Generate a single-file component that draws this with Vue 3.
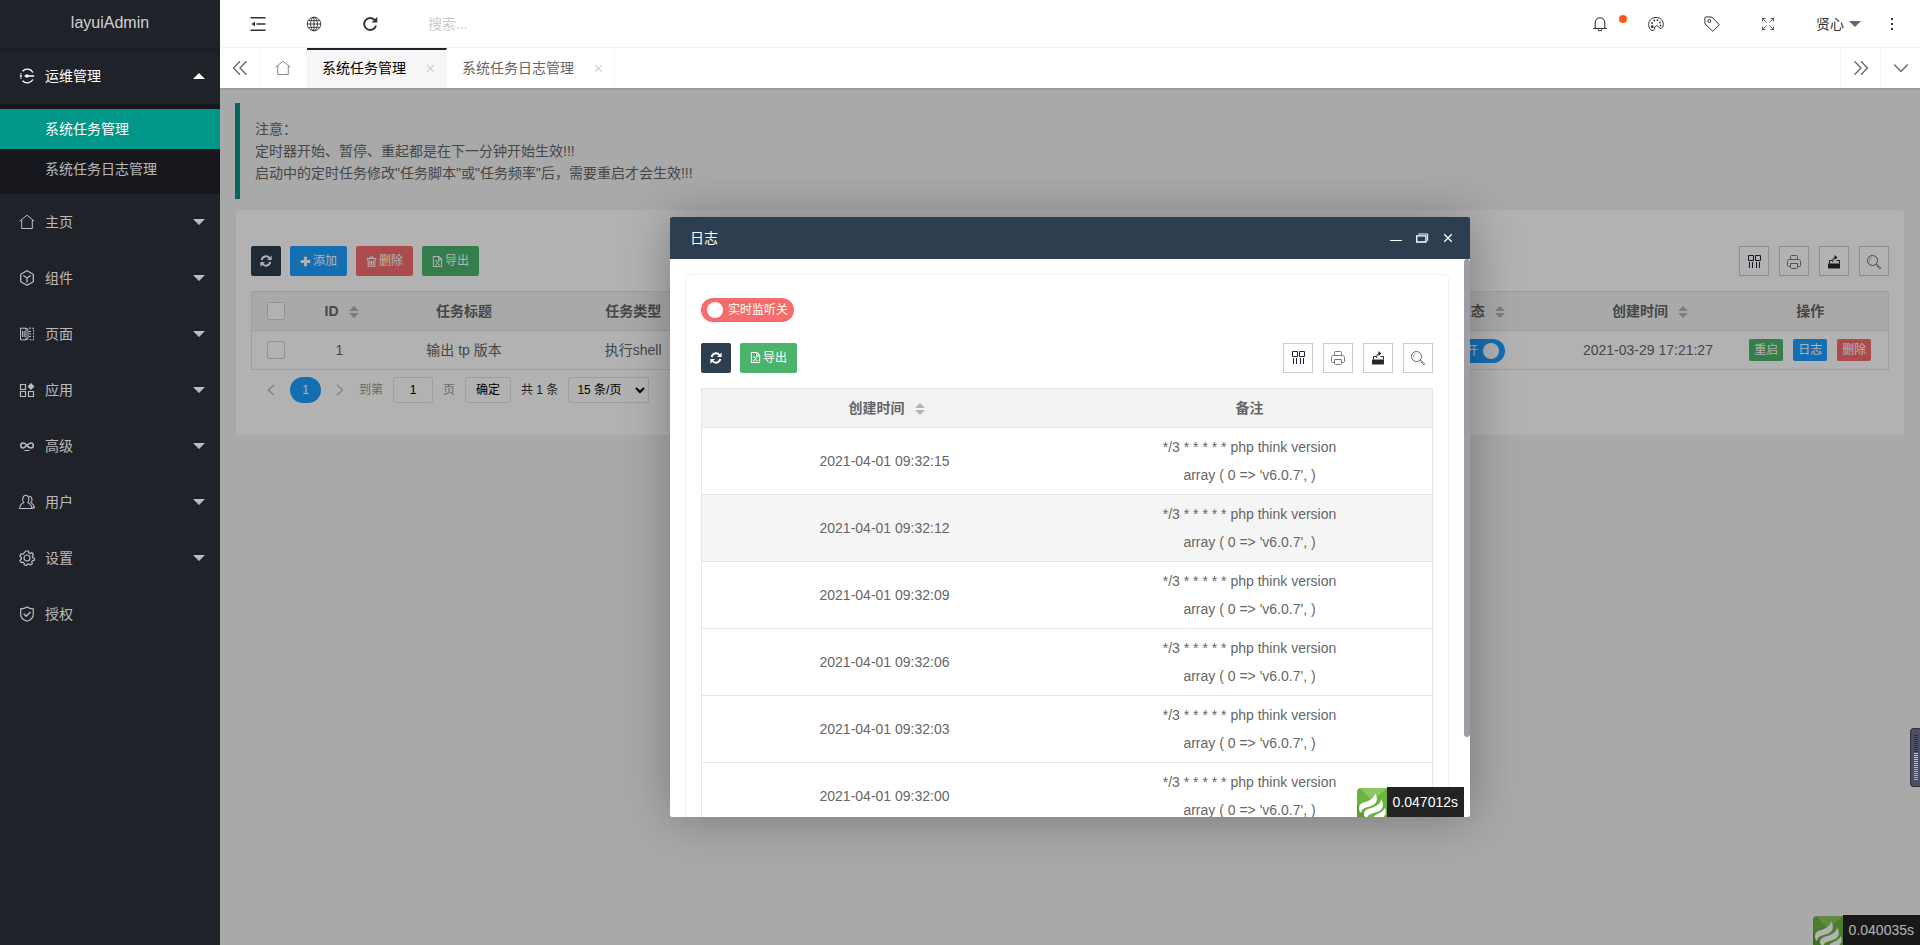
<script setup>
import { ref } from 'vue'

const menus = [
  { name: '主页', icon: 'home', more: true },
  { name: '组件', icon: 'cube', more: true },
  { name: '页面', icon: 'pages', more: true },
  { name: '应用', icon: 'apps', more: true },
  { name: '高级', icon: 'senior', more: true },
  { name: '用户', icon: 'user', more: true },
  { name: '设置', icon: 'gear', more: true },
  { name: '授权', icon: 'shield', more: false }
]
const tools = [
  { icon: 'cols', label: '筛选列' },
  { icon: 'print', label: '打印' },
  { icon: 'export', label: '导出' },
  { icon: 'search', label: '搜索' }
]
const times = ['15', '12', '09', '06', '03', '00']
const page = ref('1')
const keyword = ref('')
const pageSize = ref('15')
const running = ref(true)
const listening = ref(false)
</script>

<template>
  <div class="admin">
    <svg class="sprite" aria-hidden="true">
      <symbol id="i-ops" viewBox="0 0 16 16"><g fill="none" stroke="currentColor" stroke-width="1.3"><path d="M14 4.500A6.600 6.600 0 0 0 3.500 3.200M14 11.500A6.600 6.600 0 0 1 3.500 12.800"/><path d="M.8 8H3M5.500 8h9.700"/><path d="M1.900 5.200v1.300M1.900 9.500v1.300"/></g><circle cx="8" cy="8" r="1.700" fill="currentColor"/></symbol>
      <symbol id="i-home" viewBox="0 0 16 16"><path d="M.7 7.2 8 1.2l7.3 6M2.7 6v8.5h10.6V6" fill="none" stroke="currentColor"/></symbol>
      <symbol id="i-cube" viewBox="0 0 16 16"><path d="M8 .8 14.3 4.3v7.4L8 15.2 1.7 11.7V4.3zM4.3 5.5 8 8l3.7-2.5M8 8v4.5" fill="none" stroke="currentColor" stroke-width="1.3"/></symbol>
      <symbol id="i-pages" viewBox="0 0 16 16"><path d="M1.5 2.2h5.500v11.600H1.500zM7 2.200l2 1v9.600l-2 1M3.500 5v6M5.200 5v6" fill="none" stroke="currentColor"/><path d="M10 2.200h4.500v11.600H10M10 5.500h3M10 8h3M10 10.500h3" fill="none" stroke="currentColor" stroke-dasharray="2 1"/></symbol>
      <symbol id="i-apps" viewBox="0 0 16 16"><path d="M1.500 2.500h5v5h-5zM1.500 9.500h5v5h-5zM9.500 9.500h5v5h-5z" fill="none" stroke="currentColor" stroke-width="1.200"/><path d="m12 1 3.500 3.500L12 8 8.500 4.500z" fill="currentColor"/></symbol>
      <symbol id="i-senior" viewBox="0 0 16 16"><path d="M8 7.500C6.500 5.200 5.300 4.900 4.200 4.900A2.500 2.500 0 0 0 4.200 9.900C6.500 9.900 9 4.900 11.800 4.900a2.500 2.500 0 0 1 0 5c-1.400 0-2.600-.5-3.800-2.400" fill="none" stroke="currentColor" stroke-width="1.500"/><path d="M5.500 12.500h5" stroke="currentColor"/></symbol>
      <symbol id="i-user" viewBox="0 0 16 16"><path d="M4.800 8.600C3 7 3.200 1.200 6.800 1.200S10.600 7 8.800 8.600c2.300 1.100 4 2.400 4 5.900H.7c0-3.500 1.800-4.800 4.100-5.900zM10 2.200c3.300.2 3.800 4.800 2 6.400 2 1.200 3.200 2.400 3.300 5.300h-2.500" fill="none" stroke="currentColor" stroke-width="1.100"/></symbol>
      <symbol id="i-gear" viewBox="0 0 16 16"><g fill="none" stroke="currentColor" stroke-width="1.200"><path d="M6.600 1h2.800l.4 1.900 1.200.6 1.800-.9 1.600 2-1.100 1.600.3 1.300 1.700.7v2l-1.900.5-.7 1.200.7 1.700-2 1.500-1.500-1.200-1.400.2-.9 1.400-2.400-.6-.1-1.900-1.100-.8-1.900.4-1.200-2.300 1.500-1.300V7.500L.9 6.300l1-2.400 2 .3 1-.9z"/><circle cx="8" cy="8" r="3"/></g></symbol>
      <symbol id="i-shield" viewBox="0 0 16 16"><path d="M8 .9c2 1.300 4 1.800 6.300 1.900v5.400c0 3.500-2.300 5.700-6.300 7.100-4-1.400-6.300-3.600-6.300-7.100V2.800C4 2.700 6 2.200 8 .9z" fill="none" stroke="currentColor" stroke-width="1.200"/><path d="m4.700 7.700 2.500 2.500 4.300-4.300" fill="none" stroke="currentColor" stroke-width="1.400"/></symbol>
      <symbol id="i-flex" viewBox="0 0 16 16"><path d="M.5 1.800h15M6.500 8h9M.5 14.200h15" stroke="currentColor" stroke-width="1.600"/><path d="M1.300 8 5 5.700v4.600z" fill="currentColor"/></symbol>
      <symbol id="i-globe" viewBox="0 0 16 16"><g fill="none" stroke="currentColor" stroke-width=".9"><circle cx="8" cy="8" r="6.800"/><ellipse cx="8" cy="8" rx="3.400" ry="6.800"/><path d="M1.200 8h13.600M8 1.200v13.600M2.300 4.600h11.400M2.300 11.400h11.400"/></g></symbol>
      <symbol id="i-reload" viewBox="0 0 16 16"><path d="M12.800 4.200A6 6 0 1 0 14 9.500" fill="none" stroke="currentColor" stroke-width="1.900"/><path d="M15.300.8v5.700H9.500z" fill="currentColor"/></symbol>
      <symbol id="i-bell" viewBox="0 0 16 16"><path d="M3.200 12V7c0-7 9.600-7 9.600 0v5M1 12.500h14M6.200 13.500c.5 1.700 3.100 1.700 3.600 0" fill="none" stroke="currentColor" stroke-width="1.100"/></symbol>
      <symbol id="i-theme" viewBox="0 0 16 16"><path d="M2.800 13.800C-.8 10 .3 3.800 5 2c5.500-2 10.300 1.500 10.300 6.300 0 2.700-1.500 4.300-3 4-1.600-.3-1.500-2.600-3.700-2.600-2.800 0-1.300 4.500-3.500 4.800-1 .2-1.700-.1-2.300-.7z" fill="none" stroke="currentColor"/><g fill="currentColor"><circle cx="4.300" cy="10.700" r="1.400"/><circle cx="4" cy="7" r=".9"/><circle cx="6.300" cy="4.500" r=".9"/><circle cx="9.500" cy="4.200" r=".9"/><circle cx="12" cy="6.500" r=".9"/><circle cx="12.500" cy="9.500" r=".9"/></g></symbol>
      <symbol id="i-tag" viewBox="0 0 16 16"><path d="M.8 2.200C.8 1.400 1.300.9 2 .9l6 .2 7.300 7.800-6.600 6.400L1 8z" fill="none" stroke="currentColor"/><circle cx="5.300" cy="5" r="1.500" fill="none" stroke="currentColor"/></symbol>
      <symbol id="i-full" viewBox="0 0 16 16"><path d="M2.500 5.500v-3h3M2.700 2.700l3.800 3.800M10.500 2.500h3v3M13.300 2.700 9.500 6.500M2.500 10.500v3h3M2.700 13.300l3.800-3.800M10.500 13.500h3v-3M13.300 13.300 9.500 9.500" fill="none" stroke="currentColor" stroke-opacity=".8"/></symbol>
      <symbol id="i-dots" viewBox="0 0 16 16"><path d="M7 2h2v2H7zM7 7h2v2H7zM7 12h2v2H7z" fill="currentColor"/></symbol>
      <symbol id="i-left" viewBox="0 0 16 16"><path d="M8 1.200 1.500 8 8 14.800M14.500 1.200 8 8l6.500 6.800" fill="none" stroke="currentColor" stroke-width="1.300"/></symbol>
      <symbol id="i-right" viewBox="0 0 16 16"><path d="M8 1.200 14.500 8 8 14.800M1.500 1.200 8 8l-6.500 6.800" fill="none" stroke="currentColor" stroke-width="1.300"/></symbol>
      <symbol id="i-down" viewBox="0 0 16 16"><path d="m1.300 4.500 6.700 7 6.700-7" fill="none" stroke="currentColor" stroke-width="1.300"/></symbol>
      <symbol id="i-close" viewBox="0 0 16 16"><path d="m2 2 12 12M14 2 2 14" fill="none" stroke="currentColor" stroke-width="2"/></symbol>
      <symbol id="i-prev" viewBox="0 0 16 16"><path d="M11.500 2 5 8l6.500 6" fill="none" stroke="currentColor" stroke-width="1.500"/></symbol>
      <symbol id="i-next" viewBox="0 0 16 16"><path d="M4.500 2 11 8l-6.500 6" fill="none" stroke="currentColor" stroke-width="1.500"/></symbol>
      <symbol id="i-sync" viewBox="0 0 16 16"><path d="M2.300 6.700A5.800 5.800 0 0 1 12.600 4M13.700 9.300A5.800 5.800 0 0 1 3.400 12" fill="none" stroke="currentColor" stroke-width="2.600"/><path d="M15.500.5v6.200H9.300zM.5 15.500V9.300h6.200z" fill="currentColor"/></symbol>
      <symbol id="i-plus" viewBox="0 0 16 16"><path d="M8 1v14M1 8h14" stroke="currentColor" stroke-width="4.200"/></symbol>
      <symbol id="i-trash" viewBox="0 0 16 16"><path d="M1 3.700h14M5.300 3.500l.8-2h3.800l.8 2M2.800 4l.5 11h9.400l.5-11M5.500 6.500V13M8 6.500V13M10.500 6.500V13" fill="none" stroke="currentColor" stroke-width="1.600"/></symbol>
      <symbol id="i-excel" viewBox="0 0 16 16"><path d="M2 .8h8l4 4v10.400H2zM9.500.8v4.500H14" fill="none" stroke="currentColor" stroke-width="1.500"/><path d="m5.300 6.800 5 6M10.300 6.800l-5 6M4.500 7h2.500M9 7h2.500M4.500 12.700H7M9 12.700h2.500" stroke="currentColor" stroke-width="1.300"/></symbol>
      <symbol id="i-cols" viewBox="0 0 16 16"><path d="M2.500 1.500h5v5h-5zM9.500 1.500h5v5h-5zM3.500 8v6M6.500 8v6M10.500 8v6M13.500 8v6" fill="none" stroke="#2b1a33"/></symbol>
      <symbol id="i-print" viewBox="0 0 16 16"><path d="M4.500 5.500v-3c0-.6.400-1 1-1h5c.6 0 1 .4 1 1v3M4.500 12.500h-2c-.6 0-1-.4-1-1v-4c0-1.200.8-2 2-2h9c1.200 0 2 .8 2 2v4c0 .6-.4 1-1 1h-2M4.500 9.500h7v4c0 .6-.4 1-1 1h-5c-.6 0-1-.4-1-1z" fill="none" stroke="#707a84"/></symbol>
      <symbol id="i-export" viewBox="0 0 16 16"><path d="M2 9.500h12v4c0 .6-.4 1-1 1H3c-.6 0-1-.4-1-1z" fill="#26262e"/><path d="M3.500 9.500V6.500h2.500M13.500 9.500v-3h-3M6.700 8c0-3 .5-4.200 2.800-4.500" fill="none" stroke="#26262e"/><path d="M8.500 1 11.500 3.500 8.500 6z" fill="#26262e"/></symbol>
      <symbol id="i-search" viewBox="0 0 16 16"><circle cx="6.500" cy="6.500" r="5" fill="none" stroke="#666"/><path d="M3.700 7.500A3 3 0 0 1 5.500 3.800" fill="none" stroke="#87a5bb" stroke-width=".8"/><path d="m10.200 10.200 1.500 1.200M11.500 11l3.300 2.700-1 1.200-3-3.200z" fill="none" stroke="#666" stroke-width=".9"/></symbol>
      <symbol id="i-restore" viewBox="0 0 16 12"><path d="M1.700 3.500h11v7.300h-11z" fill="none" stroke="currentColor" stroke-width="1.600"/><path d="M3.500 1.200h11.300V9.500" fill="none" stroke="currentColor" stroke-width="1.200"/></symbol>
      <symbol id="i-think" viewBox="0 0 30 30"><path d="M4 0h26v30H0V4a4 4 0 0 1 4-4z" fill="#6db33f"/><path d="M3 0h27L15 13z" fill="#8bc763"/><path d="M0 30V16l9 14z" fill="#5a9f2d"/><path d="M2 21c0-6 4-6 9-8 4-1.700 7-4 7-8 4 7 1 11-4 13-6 2-9 1.500-10 7-1-1-2-2-2-4zM7 27c0-6 5-6 10-8 4-1.700 7-4 7-8 4 7 1 11-4 13-6 2-8 1.500-10 6-2-1-3-2-3-3zM16 30c2-5 8-3 12-10 2 5 0 8-3 10z" fill="#fff"/></symbol>
    </svg>

    <aside class="side">
      <div class="logo">layuiAdmin</div>
      <nav>
        <a class="item open" href="#"><svg class="ic"><use href="#i-ops" /></svg>运维管理<i class="caret up"></i></a>
        <div class="children">
          <a class="active" href="#">系统任务管理</a>
          <a href="#">系统任务日志管理</a>
        </div>
        <a v-for="m in menus" :key="m.name" class="item" href="#">
          <svg class="ic"><use :href="'#i-' + m.icon" /></svg>{{ m.name }}<i v-if="m.more" class="caret"></i>
        </a>
      </nav>
    </aside>

    <div class="main">
      <header class="top">
        <button class="tb" aria-label="侧边伸缩"><svg><use href="#i-flex" /></svg></button>
        <button class="tb" aria-label="前台"><svg><use href="#i-globe" /></svg></button>
        <button class="tb" aria-label="刷新"><svg><use href="#i-reload" /></svg></button>
        <input v-model="keyword" class="find" type="text" placeholder="搜索..." aria-label="搜索" />
        <button class="tb bell" aria-label="消息"><svg><use href="#i-bell" /></svg><i class="dot"></i></button>
        <button class="tb" aria-label="主题"><svg><use href="#i-theme" /></svg></button>
        <button class="tb" aria-label="便签"><svg><use href="#i-tag" /></svg></button>
        <button class="tb" aria-label="全屏"><svg><use href="#i-full" /></svg></button>
        <button class="who">贤心<i class="caret"></i></button>
        <button class="tb more" aria-label="更多"><svg><use href="#i-dots" /></svg></button>
      </header>

      <div class="tabs">
        <button class="ctl" aria-label="向左"><svg><use href="#i-left" /></svg></button>
        <a class="tab hometab" href="#" aria-label="主页"><svg><use href="#i-home" /></svg></a>
        <div class="tab on"><a href="#">系统任务管理</a><button aria-label="关闭"><svg><use href="#i-close" /></svg></button></div>
        <div class="tab"><a href="#">系统任务日志管理</a><button aria-label="关闭"><svg><use href="#i-close" /></svg></button></div>
        <button class="ctl end" aria-label="向右"><svg><use href="#i-right" /></svg></button>
        <button class="ctl" aria-label="标签操作"><svg><use href="#i-down" /></svg></button>
      </div>

      <section class="frame">
        <blockquote class="note">
          注意：<br />定时器开始、暂停、重起都是在下一分钟开始生效!!!<br />启动中的定时任务修改"任务脚本"或"任务频率"后，需要重启才会生效!!!
        </blockquote>

        <div class="card tasks">
          <div class="bar">
            <button class="btn navy sq" aria-label="刷新"><svg><use href="#i-sync" /></svg></button>
            <button class="btn blue"><svg><use href="#i-plus" /></svg>添加</button>
            <button class="btn red"><svg><use href="#i-trash" /></svg>删除</button>
            <button class="btn green"><svg><use href="#i-excel" /></svg>导出</button>
            <div class="tools">
              <button v-for="t in tools" :key="t.icon" :aria-label="t.label"><svg><use :href="'#i-' + t.icon" /></svg></button>
            </div>
          </div>
          <table class="grid">
            <colgroup><col class="c-check" /><col class="c-id" /><col /><col /><col /><col /><col /><col /><col /><col /><col class="c-op" /></colgroup>
            <thead>
              <tr>
                <th><input type="checkbox" aria-label="全选" /></th>
                <th>ID<i class="sort"></i></th>
                <th>任务标题</th><th>任务类型</th><th></th><th></th><th></th><th></th>
                <th>状态<i class="sort"></i></th>
                <th>创建时间<i class="sort"></i></th>
                <th>操作</th>
              </tr>
            </thead>
            <tbody>
              <tr>
                <td><input type="checkbox" aria-label="选择任务" /></td>
                <td>1</td><td>输出 tp 版本</td><td>执行shell</td><td></td><td></td><td></td><td></td>
                <td><label class="switch run"><input v-model="running" type="checkbox" />开<i class="knob"></i></label></td>
                <td>2021-03-29 17:21:27</td>
                <td><div class="ops"><button class="green">重启</button><button class="blue">日志</button><button class="red">删除</button></div></td>
              </tr>
            </tbody>
          </table>
          <div class="pager">
            <button class="arrow" aria-label="上一页"><svg><use href="#i-prev" /></svg></button>
            <a class="cur" href="#">1</a>
            <button class="arrow" aria-label="下一页"><svg><use href="#i-next" /></svg></button>
            <label class="goto">到第<input v-model="page" type="text" />页</label>
            <button class="ok">确定</button>
            <span class="total">共 1 条</span>
            <select v-model="pageSize" aria-label="每页条数"><option value="15">15 条/页</option></select>
          </div>
        </div>

        <div class="trace"><svg><use href="#i-think" /></svg><span>0.040035s</span></div>

        <div class="shade">
          <div class="dialog" role="dialog" aria-labelledby="dlg-title">
            <div class="title">
              <span id="dlg-title">日志</span>
              <button class="min" aria-label="最小化"><i></i></button>
              <button class="max" aria-label="还原"><svg><use href="#i-restore" /></svg></button>
              <button class="cls" aria-label="关闭"><svg><use href="#i-close" /></svg></button>
            </div>
            <div class="body">
              <div class="card logs">
                <label class="switch listen"><input v-model="listening" type="checkbox" /><i class="knob"></i>实时监听关</label>
                <div class="bar">
                  <button class="btn navy sq" aria-label="刷新"><svg><use href="#i-sync" /></svg></button>
                  <button class="btn green"><svg><use href="#i-excel" /></svg>导出</button>
                  <div class="tools">
                    <button v-for="t in tools" :key="t.icon" :aria-label="t.label"><svg><use :href="'#i-' + t.icon" /></svg></button>
                  </div>
                </div>
                <table class="grid">
                  <thead><tr><th>创建时间<i class="sort"></i></th><th>备注</th></tr></thead>
                  <tbody>
                    <tr v-for="(t, i) in times" :key="t" :class="{ hover: i === 1 }">
                      <td>2021-04-01 09:32:{{ t }}</td>
                      <td>*/3 * * * * * php think version<br />array ( 0 =&gt; 'v6.0.7', )</td>
                    </tr>
                  </tbody>
                </table>
              </div>
            </div>
            <i class="thumb"></i>
            <div class="trace inner"><svg><use href="#i-think" /></svg><span>0.047012s</span></div>
          </div>
        </div>

        <div class="meter"><i v-for="n in 23" :key="n" :class="{ off: n < 10, high: n > 9 && n < 14, mid: n > 13 && n < 18 }"></i></div>
      </section>
    </div>
  </div>
</template>

<style>
body { margin: 0; }
</style>

<style scoped>
* { box-sizing: border-box; }
.admin { display: flex; height: 100vh; overflow: hidden; font: 14px/22px "Liberation Sans", "Noto Sans CJK SC", sans-serif; color: #333; }
.sprite { position: absolute; width: 0; height: 0; }
svg { display: block; width: 16px; height: 16px; flex: none; }
a { color: inherit; text-decoration: none; }
button, input, select { font: inherit; color: inherit; }
button { display: flex; align-items: center; justify-content: center; padding: 0; border: 0; background: none; cursor: pointer; white-space: nowrap; }
.caret { width: 0; height: 0; border: 6px solid transparent; border-top-color: currentColor; border-bottom-width: 0; }
.caret.up { border-bottom-color: currentColor; border-top-width: 0; border-bottom-width: 6px; }

.side { flex: none; width: 220px; background: #20222a; color: rgba(255, 255, 255, .7); }
.logo { height: 48px; line-height: 46px; text-align: center; font-size: 16px; color: rgba(255, 255, 255, .8); box-shadow: 0 1px 2px rgba(0, 0, 0, .15); }
.item { display: flex; align-items: center; height: 56px; padding: 0 15px 0 19px; }
.item .ic { margin-right: 10px; }
.item .caret { margin-left: auto; }
.open { color: #fff; }
.children { padding: 5px 0; background: #17181e; border-radius: 2px; }
.children a { display: block; height: 40px; line-height: 40px; padding-left: 45px; }
.children .active { background: #009688; color: #fff; }

.main { flex: 1; min-width: 0; display: flex; flex-direction: column; }
.top { display: flex; align-items: center; flex: none; height: 48px; padding-left: 10px; padding-right: 8px; background: #fff; border-bottom: 1px solid #f6f6f6; }
.tb { position: relative; width: 56px; height: 47px; }
.find { flex: 1; min-width: 0; height: 40px; padding: 0 30px; border: 0; outline: 0; background: none; }
.find::placeholder { color: #ccc; opacity: 1; }
.dot { position: absolute; left: 47px; top: 15px; width: 8px; height: 8px; border-radius: 50%; background: #ff5722; }
.who { gap: 5px; padding: 0 11px 0 20px; height: 47px; }
.who .caret { color: #666; }
.more { width: 40px; }

.tabs { position: relative; display: flex; flex: none; height: 40px; background: #fff; color: #666; box-shadow: 0 1px 2px rgba(0, 0, 0, .15); z-index: 1; }
.ctl { width: 40px; border-right: 1px solid #f6f6f6; }
.ctl.end { margin-left: auto; border-left: 1px solid #f6f6f6; width: 41px; }
.ctl:last-child { border-right: 0; width: 39px; }
.tab { display: flex; align-items: center; padding: 0 8px 0 15px; border-right: 1px solid #f6f6f6; }
.tab button { width: 16px; height: 16px; margin-left: 16px; color: #ccc; }
.tab button svg { width: 9px; height: 9px; }
.hometab { padding: 0 15px; color: #888; }
.tab.on { color: #000; background: #f6f6f6; border-top: 2px solid #20222a; padding-bottom: 2px; }

.frame { position: relative; flex: 1; min-height: 0; padding: 15px; background: #f2f2f2; color: #666; }
.note { margin: 0 0 10px; padding: 15px; border-left: 5px solid #009688; }
.card { border: 1px solid #f2f2f2; border-radius: 5px; background: #fff; }
.tasks { padding: 36px 15px 32px; }
.bar { display: flex; gap: 9px; margin-bottom: 15px; }
.btn { gap: 2px; height: 30px; padding: 0 10px; border-radius: 2px; font-size: 12px; color: #fff; }
.btn svg { width: 11px; height: 11px; }
.btn.sq { width: 30px; padding: 0; }
.btn.sq svg { width: 12px; height: 12px; }
.navy { background: #2c3e50; }
.blue { background: #1e9fff; }
.red { background: #f56c6c; }
.green { background: #4cb46a; }
.tools { display: flex; gap: 10px; margin-left: auto; }
.tools button { width: 30px; height: 30px; padding-top: 1px; border: 1px solid #ccc; color: #333; }

.grid { width: 100%; table-layout: fixed; border-collapse: collapse; border: 1px solid #e6e6e6; }
.c-check { width: 48px; }
.c-id { width: 80px; }
.c-op { width: 156px; }
.grid th, .grid td { height: 39px; padding: 5px 0; line-height: 28px; text-align: center; border-bottom: 1px solid #e6e6e6; }
.grid thead tr { background: #f2f2f2; }
.grid .hover { background: #f5f5f5; }
.grid input[type="checkbox"] { display: block; width: 18px; height: 18px; margin: 0 auto; }
.grid th > input, .grid td > input { appearance: none; border: 1px solid #d2d2d2; border-radius: 2px; background: #fff; }
.sort { position: relative; display: inline-block; width: 10px; height: 12px; margin: 0 -4px 0 10px; vertical-align: -2px; }
.sort::before, .sort::after { content: ""; position: absolute; left: 0; border: 5px solid transparent; }
.sort::before { top: 0; border-top: 0; border-bottom-color: #b2b2b2; }
.sort::after { bottom: 0; border-bottom: 0; border-top-color: #b2b2b2; }
.ops { display: flex; justify-content: center; gap: 10px; }
.ops button { width: 34px; height: 22px; border-radius: 2px; font-size: 12px; color: #fff; }
.switch { display: inline-flex; align-items: center; gap: 5px; height: 24px; padding: 0 6px; border-radius: 12px; font-size: 12px; line-height: 24px; color: #fff; cursor: pointer; vertical-align: middle; }
.switch input[type="checkbox"] { position: absolute; opacity: 0; width: 1px; height: 1px; margin: 0; }
.knob { width: 16px; height: 16px; border-radius: 50%; background: #fff; }
.run { padding-left: 13px; background: #1e9fff; }
.listen { display: flex; width: max-content; margin-bottom: 21px; background: #f56c6c; }

.pager { display: flex; align-items: center; height: 26px; margin-top: 7px; padding-left: 12px; font-size: 12px; color: #333; }
.arrow { width: 16px; color: #bbb; }
.arrow svg { width: 14px; height: 14px; }
.cur { width: 31px; margin: 0 11px; line-height: 26px; text-align: center; border-radius: 13px; background: #1e9fff; color: #fff; }
.goto { display: flex; align-items: center; margin-left: 11px; color: #999; }
.goto input { width: 40px; height: 26px; margin: 0 10px; padding: 0; text-align: center; border: 1px solid #e2e2e2; border-radius: 2px; color: #000; background: #fff; }
.ok { width: 46px; height: 26px; margin: 0 10px; border: 1px solid #e2e2e2; border-radius: 2px; color: #000; background: #fff; }
.pager select { width: 81px; height: 26px; margin-left: 10px; padding: 0 4px; border: 1px solid #e2e2e2; border-radius: 2px; color: #000; background: #fff; }

.trace { position: absolute; right: 0; bottom: 0; display: flex; height: 30px; overflow: hidden; line-height: 30px; color: #fff; }
.trace svg { width: 30px; height: 30px; margin-top: 1px; }
.trace span { padding: 0 6px; background: #232323; }
.trace.inner { right: 6px; }

.shade { position: absolute; inset: 0; display: grid; place-items: center; background: rgba(0, 0, 0, .3); }
.dialog { position: relative; display: flex; flex-direction: column; width: 800px; max-width: 96%; height: 600px; max-height: 96%; border-radius: 2px; background: #fff; box-shadow: 1px 1px 50px rgba(0, 0, 0, .3); }
.title { display: flex; align-items: center; flex: none; height: 42px; padding: 0 15px 0 20px; border-radius: 2px 2px 0 0; background: #2c3e50; color: #fff; }
.title button { height: 20px; }
.min { margin-left: auto; width: 14px; }
.min i { width: 12px; height: 1px; margin-top: 6px; background: #fff; }
.max { margin-left: 12px; }
.max svg { width: 14px; height: 10px; }
.cls { margin-left: 12px; width: 14px; }
.cls svg { width: 10px; height: 10px; }
.body { flex: 1; min-height: 0; padding: 15px 21px 0 15px; overflow: hidden; }
.logs { padding: 23px 15px 15px; }
.thumb { position: absolute; right: 0; top: 42px; width: 6px; height: 478px; border-radius: 3px; background: #9c9ea3; }

.meter { position: absolute; right: 0; bottom: 158px; width: 10px; height: 59px; padding: 6px 2px 0 3px; border: 1px solid #2d303b; border-right: 0; border-radius: 4px 0 0 4px; background: #4a5062; }
.meter i { display: block; height: 1px; margin-bottom: 1px; background: #70d0b4; }
.meter .mid { background: #a9cf8c; }
.meter .high { background: #dccf6c; }
.meter .off { background: #2d303b; }
</style>
